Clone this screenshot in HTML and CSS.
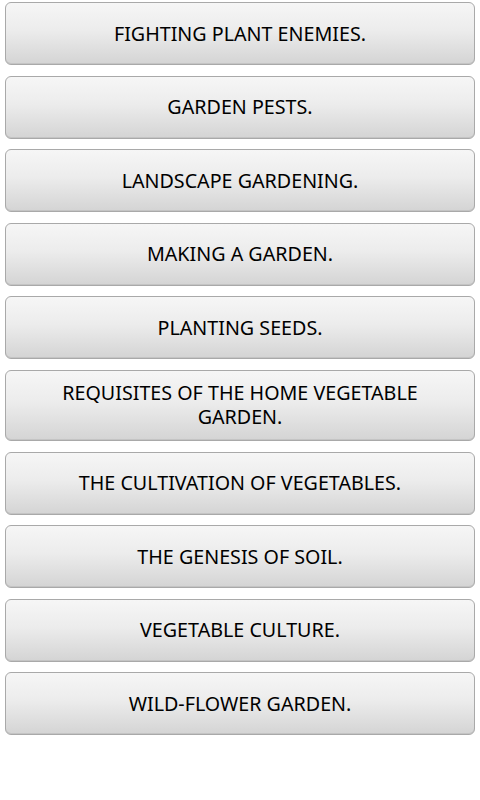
FILE: index.html
```html
<!DOCTYPE html>
<html lang="en">
<head>
    <meta charset="UTF-8">
    <meta name="viewport" content="width=device-width, initial-scale=1.0">
    <title>Garden Topics</title>
    <link rel="stylesheet" href="styles.css">
</head>
<body>
    <div class="list">
        <button class="topic-btn">FIGHTING PLANT ENEMIES.</button>
        <button class="topic-btn">GARDEN PESTS.</button>
        <button class="topic-btn">LANDSCAPE GARDENING.</button>
        <button class="topic-btn">MAKING A GARDEN.</button>
        <button class="topic-btn">PLANTING SEEDS.</button>
        <button class="topic-btn">REQUISITES OF THE HOME VEGETABLE GARDEN.</button>
        <button class="topic-btn">THE CULTIVATION OF VEGETABLES.</button>
        <button class="topic-btn">THE GENESIS OF SOIL.</button>
        <button class="topic-btn">VEGETABLE CULTURE.</button>
        <button class="topic-btn">WILD-FLOWER GARDEN.</button>
    </div>
</body>
</html>
```

FILE: styles.css
```css
body {
    margin: 0;
    background: #fff;
    font-family: "Noto Sans", "Open Sans", sans-serif;
}
.list {
    display: flex;
    flex-direction: column;
    gap: 10.6px;
    padding: 2px 5px 0 5px;
}
.topic-btn {
    display: block;
    width: 100%;
    min-height: 63px;
    padding: 10.5px 44px;
    border: 1px solid #a9a9a9;
    border-radius: 6px;
    background: linear-gradient(to bottom, #f6f6f6 0%, #ececec 45%, #d4d4d4 100%);
    box-shadow: inset 0 -1px 0 #c4c4c4;
    font-family: inherit;
    font-size: 19.7px;
    line-height: 24px;
    color: #000;
    text-align: center;
    box-sizing: border-box;
}
```
